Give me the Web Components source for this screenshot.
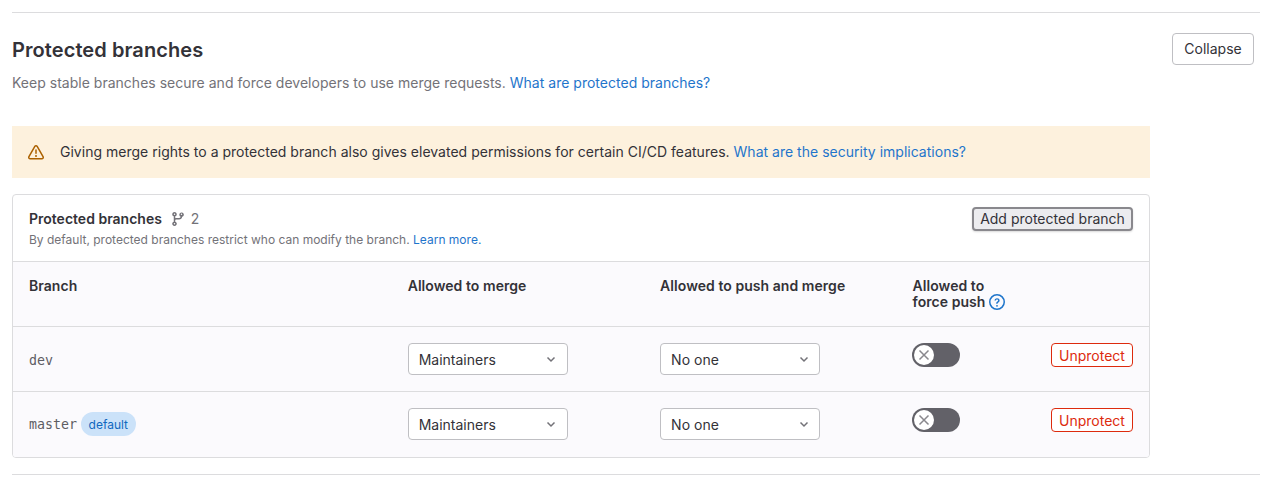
<!DOCTYPE html>
<html><head><meta charset="utf-8">
<style>
html,body{margin:0;padding:0;background:#fff}
body{font-family:Inter,"Liberation Sans",sans-serif;font-size:14px;color:#333238;width:1272px;height:487px;overflow:hidden}
</style></head><body>
<template id="t-section">
<style>
:host{display:block;box-sizing:border-box;margin:12px 12px 0;width:1248px;height:463px;border-top:1px solid #dcdcde;border-bottom:1px solid #dcdcde;position:relative;padding-top:23px}
.top{display:flex;justify-content:space-between;align-items:flex-start}
h4{margin:0;font-size:20px;line-height:28px;font-weight:600;color:#333238;letter-spacing:.08px}
p{margin:9px 0 0;font-size:14px;line-height:20px;color:#737278;letter-spacing:.014px}
a{color:#1f75cb;text-decoration:none}
.collapse{margin-top:-3px;margin-right:6px}
.body{width:1138px;margin-top:33px}
</style>
<div class="top"><div><h4>Protected branches</h4><p>Keep stable branches secure and force developers to use merge requests. <a>What are protected branches?</a></p></div><gl-button class="collapse" style="width:82px;height:32px">Collapse</gl-button></div>
<div class="body"><slot></slot></div>
</template>

<template id="t-button">
<style>
:host{display:inline-flex;box-sizing:border-box;align-items:center;justify-content:center;border:1px solid #bfbfc3;border-radius:4px;background:#fff;color:#333238;font-size:14px;line-height:16px;white-space:nowrap}
</style><slot></slot>
</template>

<template id="t-alert">
<style>
:host{display:flex;align-items:center;box-sizing:border-box;height:52px;background:#fdf1dd;padding:0 16px;color:#333238;font-size:14px;line-height:20px;margin-bottom:16px;letter-spacing:.014px}
svg{width:16px;height:16px;flex:none;margin-right:16px;fill:#ab6100}
a{color:#1f75cb;text-decoration:none}
</style>
<svg viewBox="0 0 16 16"><path fill-rule="evenodd" d="M8 2.5a.6.6 0 0 0-.52.3L1.6 13.1a.6.6 0 0 0 .52.9h11.76a.6.6 0 0 0 .52-.9L8.52 2.8A.6.6 0 0 0 8 2.5zm-1.82-.44a2.1 2.1 0 0 1 3.64 0l5.88 10.3A2.1 2.1 0 0 1 13.88 15.5H2.12a2.1 2.1 0 0 1-1.82-3.14l5.88-10.3z"/><path d="M8 5.2a.75.75 0 0 1 .75.75v3.3a.75.75 0 0 1-1.5 0v-3.3A.75.75 0 0 1 8 5.2z"/><circle cx="8" cy="12" r="1"/></svg>
<span><slot></slot> <a>What are the security implications?</a></span>
</template>

<template id="t-card">
<style>
:host{display:block;box-sizing:border-box;height:264px;border:1px solid #dcdcde;border-radius:4px;overflow:hidden;background:#fff}
.head{display:flex;justify-content:space-between;box-sizing:border-box;height:67px;padding:12px 16px 0;border-bottom:1px solid #dcdcde}
.title{display:flex;align-items:center;font-size:14px;line-height:20px;font-weight:600;color:#333238;height:24px}
.count{display:inline-flex;align-items:center;margin-left:9px;font-weight:400;color:#737278}
.count svg{width:16px;height:16px;margin-right:4px;fill:#737278}
.sub{font-size:12px;line-height:16px;color:#737278;margin-top:1px}
a{color:#1f75cb;text-decoration:none}
.add{width:161px;height:24px;padding-bottom:1px;background:#ececef;border:2px solid #89888d;border-radius:4px;box-sizing:border-box;display:flex;align-items:center;justify-content:center;font-size:14px;color:#333238;box-shadow:0 1px 2px rgba(0,0,0,.15)}
.rows{background:#fbfafd}
</style>
<div class="head"><div><div class="title">Protected branches<span class="count"><svg viewBox="0 0 16 16"><path fill-rule="evenodd" d="M3.5 1a2.25 2.25 0 0 0-.75 4.37v5.26a2.25 2.25 0 1 0 1.5 0V9.5c0-.55.45-1 1-1H8a3.25 3.25 0 0 0 3.2-2.66 2.25 2.25 0 1 0-1.53-.1A1.75 1.75 0 0 1 8 7H5.25c-.35 0-.69.06-1 .17v-1.8A2.25 2.25 0 0 0 3.5 1zM2.75 3.25a.75.75 0 1 1 1.5 0 .75.75 0 0 1-1.5 0zm0 9.5a.75.75 0 1 1 1.5 0 .75.75 0 0 1-1.5 0zM10.5 2.5a.75.75 0 1 0 0 1.5.75.75 0 0 0 0-1.5z"/></svg>2</span></div><div class="sub">By default, protected branches restrict who can modify the branch. <a>Learn more.</a></div></div><div class="add">Add protected branch</div></div>
<div class="rows"><slot></slot></div>
</template>

<template id="t-row">
<style>
:host{display:grid;grid-template-columns:1.5fr 1fr 1fr 1fr;box-sizing:border-box;height:65px;border-bottom:1px solid #dcdcde}
:host(:last-child){border-bottom:0}
::slotted(*){padding:16px 16px 0;min-width:0}
</style><slot></slot>
</template>

<template id="t-th">
<style>
:host{display:block;box-sizing:border-box;font-size:14px;line-height:16px;font-weight:600;color:#333238;letter-spacing:.05px}
</style><slot></slot>
</template>

<template id="t-branch">
<style>
:host{display:flex;align-items:center;box-sizing:border-box;height:66px;font-family:"DejaVu Sans Mono","Liberation Mono",monospace;font-size:13.3px;color:#5e5d63;padding-top:0 !important}
</style><span><slot></slot></span><slot name="badge"></slot>
</template>

<template id="t-badge">
<style>
:host{display:inline-flex;align-items:center;height:24px;margin-left:4px;padding:0 7.5px;border-radius:12px;background:#cbe2f9;color:#1068bf;font-family:Inter,sans-serif;font-size:12px}
</style><slot></slot>
</template>

<template id="t-select">
<style>
:host{display:block;box-sizing:border-box;height:64px;padding-top:16px !important}
.s{box-sizing:border-box;width:160px;height:32px;border:1px solid #bfbfc3;border-radius:4px;background:#fff;display:flex;align-items:center;justify-content:space-between;padding:0 9.5px 0 10px;font-size:14px;color:#333238;margin-left:0}
svg{width:12px;height:12px;fill:none;stroke:#737278;stroke-width:1.5;margin-top:-1px}
</style><div class="s"><span><slot></slot></span><svg viewBox="0 0 12 12"><path d="M2.5 4.5 6 8l3.5-3.5"/></svg></div>
</template>

<template id="t-ctl">
<style>
:host{display:flex;justify-content:space-between;align-items:flex-start;box-sizing:border-box;padding-top:16px !important}
.t{width:48px;height:24px;border-radius:12px;background:#626168;position:relative;margin-left:-.5px}
.k{position:absolute;left:2px;top:2px;width:20px;height:20px;border-radius:50%;background:#fff;display:flex;align-items:center;justify-content:center}
.k svg{width:14px;height:14px;stroke:#89888d;stroke-width:1.5;fill:none}
.u{box-sizing:border-box;width:82px;height:24px;border:1px solid #dd2b0e;border-radius:4px;color:#dd2b0e;display:flex;align-items:center;justify-content:center;font-size:14px;background:#fff}
</style>
<div class="t"><div class="k"><svg viewBox="0 0 14 14"><path d="M2.5 2.5l9 9M11.5 2.5l-9 9"/></svg></div></div><div class="u">Unprotect</div>
</template>

<script>
function def(name,tid){customElements.define(name,class extends HTMLElement{constructor(){super();this.attachShadow({mode:'open'}).appendChild(document.getElementById(tid).content.cloneNode(true));}});}
def('gl-section','t-section');def('gl-button','t-button');def('gl-alert','t-alert');def('gl-card','t-card');def('gl-row','t-row');def('gl-th','t-th');def('gl-branch','t-branch');def('gl-badge','t-badge');def('gl-select','t-select');def('gl-ctl','t-ctl');
</script>

<gl-section>
<gl-alert>Giving merge rights to a protected branch also gives elevated permissions for certain CI/CD features.</gl-alert>
<gl-card>
<gl-row>
<gl-th>Branch</gl-th><gl-th>Allowed to merge</gl-th><gl-th>Allowed to push and merge</gl-th>
<gl-th>Allowed to<br>force push <svg viewBox="0 0 16 16" width="16" height="16" style="vertical-align:-3px;fill:#1f75cb"><path fill-rule="evenodd" d="M8 1.5a6.5 6.5 0 1 0 0 13 6.5 6.5 0 0 0 0-13zM0 8a8 8 0 1 1 16 0A8 8 0 0 1 0 8z"/><path d="M8 4.2c-1.4 0-2.5 1-2.5 2.3h1.4c0-.5.5-1 1.1-1s1.1.4 1.1 1c0 .4-.2.6-.8 1-.7.5-1.1 1-1.1 1.9v.3h1.4v-.3c0-.4.2-.6.8-1 .7-.5 1.2-1.1 1.2-2 0-1.3-1.1-2.2-2.6-2.2z"/><circle cx="8" cy="11.8" r=".9"/></svg></gl-th>
</gl-row>
<gl-row><gl-branch>dev</gl-branch><gl-select>Maintainers</gl-select><gl-select>No one</gl-select><gl-ctl></gl-ctl></gl-row>
<gl-row><gl-branch style="height:64px">master<gl-badge slot="badge">default</gl-badge></gl-branch><gl-select>Maintainers</gl-select><gl-select>No one</gl-select><gl-ctl></gl-ctl></gl-row>
</gl-card>
</gl-section>
</body></html>
